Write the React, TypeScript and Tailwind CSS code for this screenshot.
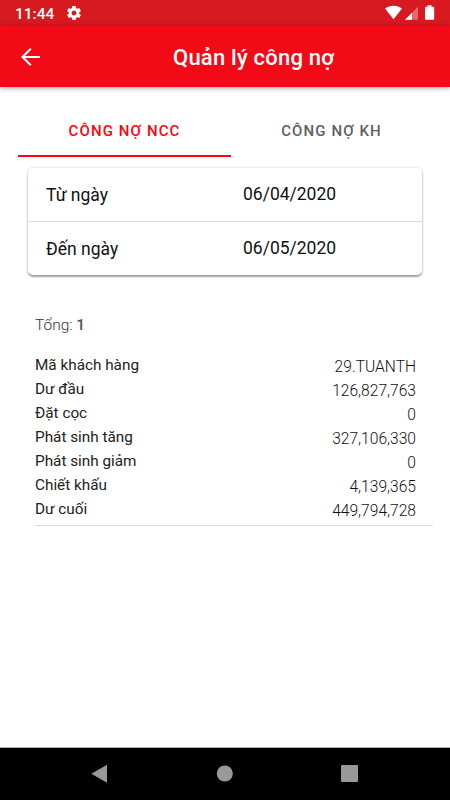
import React from "react";

const rows = [
  ["Mã khách hàng", "29.TUANTH"],
  ["Dư đầu", "126,827,763"],
  ["Đặt cọc", "0"],
  ["Phát sinh tăng", "327,106,330"],
  ["Phát sinh giảm", "0"],
  ["Chiết khấu", "4,139,365"],
  ["Dư cuối", "449,794,728"],
];

const dates = [
  ["Từ ngày", "06/04/2020"],
  ["Đến ngày", "06/05/2020"],
];

function StatusBar() {
  return (
    <div className="flex h-[26px] items-center bg-[#d71a20] pr-[15px] pl-[15px] text-white">
      <span className="w-[52px] pt-[2px] text-[15.5px] leading-6 font-medium whitespace-nowrap">11:44</span>
      <svg className="h-[14px] w-[14px]" viewBox="2 2 20 20" fill="currentColor">
        <path d="M19.43 12.98c.04-.32.07-.64.07-.98s-.03-.66-.07-.98l2.11-1.65c.19-.15.24-.42.12-.64l-2-3.46c-.12-.22-.39-.3-.61-.22l-2.49 1c-.52-.4-1.08-.73-1.69-.98l-.38-2.65A.488.488 0 0 0 14 2h-4c-.25 0-.46.18-.49.42l-.38 2.65c-.61.25-1.17.59-1.69.98l-2.49-1c-.23-.09-.49 0-.61.22l-2 3.46c-.13.22-.07.49.12.64l2.11 1.65c-.04.32-.07.65-.07.98s.03.66.07.98l-2.11 1.65c-.19.15-.24.42-.12.64l2 3.46c.12.22.39.3.61.22l2.49-1c.52.4 1.08.73 1.69.98l.38 2.65c.03.24.24.42.49.42h4c.25 0 .46-.18.49-.42l.38-2.65c.61-.25 1.17-.59 1.69-.98l2.49 1c.23.09.49 0 .61-.22l2-3.46c.12-.22.07-.49-.12-.64l-2.11-1.65zM12 15.5c-1.93 0-3.5-1.57-3.5-3.5s1.57-3.5 3.5-3.5 3.5 1.57 3.5 3.5-1.57 3.5-3.5 3.5z" />
      </svg>
      <svg className="ml-auto h-[26px] w-[52px]" viewBox="383 0 52 26" fill="currentColor">
        <path d="M385 8.6C390.300 4.900 396.700 4.900 402 8.600L393.500 19.200Z" />
        <path d="M418 6.700V19.700H405Z" opacity="0.35" />
        <path d="M412 12.700V19.700H405Z" />
        <path d="M427.500 5.300h4v1.500h1.800q.9 0 .9.900v11q0 1-.9 1h-7.400q-.9 0-.9-1v-11q0-.9.900-.9h1.600z" />
      </svg>
    </div>
  );
}

function Header() {
  return (
    <header className="flex h-[61px] items-center bg-[#f20b17] pl-[21px] text-white shadow-[0_1px_5px_rgba(0,0,0,0.4)]">
      <svg className="h-[18px] w-[19px]" viewBox="0 0 19 18" fill="none" stroke="currentColor" strokeWidth="2">
        <path d="M9.800 .8 1.500 9l8.300 8.200M1.500 9H19" />
      </svg>
      <h1 className="ml-[133px] pt-[2px] text-[22px] leading-7 font-medium tracking-[0.22px] whitespace-nowrap">Quản lý công nợ</h1>
    </header>
  );
}

export default function App() {
  return (
    <div className="flex h-[800px] w-[450px] flex-col overflow-hidden bg-white font-[Roboto,sans-serif]">
      <StatusBar />
      <Header />
      <main className="flex-1">
        <nav className="mt-[16px] ml-[18px] flex h-[54px] w-[414px] text-[15px] font-medium tracking-[1.1px]">
          <div className="flex w-[213px] items-center justify-center border-b-2 border-[#fa0510] pt-[4px] text-[#fa0510]">CÔNG NỢ NCC</div>
          <div className="flex w-[201px] items-center justify-center border-b-2 border-transparent pt-[4px] text-[#606060]">CÔNG NỢ KH</div>
        </nav>
        <section className="mt-[11px] ml-[28px] w-[394px] rounded-[5px] text-[17.5px] text-[#111] shadow-[0_2px_2px_rgba(0,0,0,0.35),0_0_3px_rgba(0,0,0,0.18)]">
          {dates.map(([label, date], i) => (
            <div key={label} className={i === 0 ? "flex h-[54px] border-b border-[#dcdcdc] pl-[18px]" : "flex h-[53px] pl-[18px]"}>
              <span className="w-[197px] pt-[14px] leading-[27px]">{label}</span>
              <span className="pt-[13px] leading-[27px]">{date}</span>
            </div>
          ))}
        </section>
        <section className="mt-[38px] ml-[35px] w-[398px]">
          <p className="mb-[16px] text-[15.5px] leading-6 font-light text-[#333]">
            Tổng: <span className="font-medium text-[#555]">1</span>
          </p>
          <div className="border-b border-[#d8d8d8] pb-[4px]">
            {rows.map(([label, value]) => (
              <div key={label} className="flex h-6 justify-between pr-[17px] text-[15.3px] leading-6">
                <span className="text-[#222]">{label}</span>
                <span className="pt-[2px] text-[15.6px] font-light text-[#111]">{value}</span>
              </div>
            ))}
          </div>
        </section>
      </main>
      <footer className="h-[53px] border-t border-[#aaa] bg-black">
        <svg className="h-[52px] w-[450px]" viewBox="0 748 450 52" fill="#999">
          <path d="M91.300 773.700 107 764.800V782.700Z" />
          <circle cx="224.800" cy="773.500" r="8" />
          <rect x="341" y="765" width="17" height="17" rx="1" />
        </svg>
      </footer>
    </div>
  );
}
